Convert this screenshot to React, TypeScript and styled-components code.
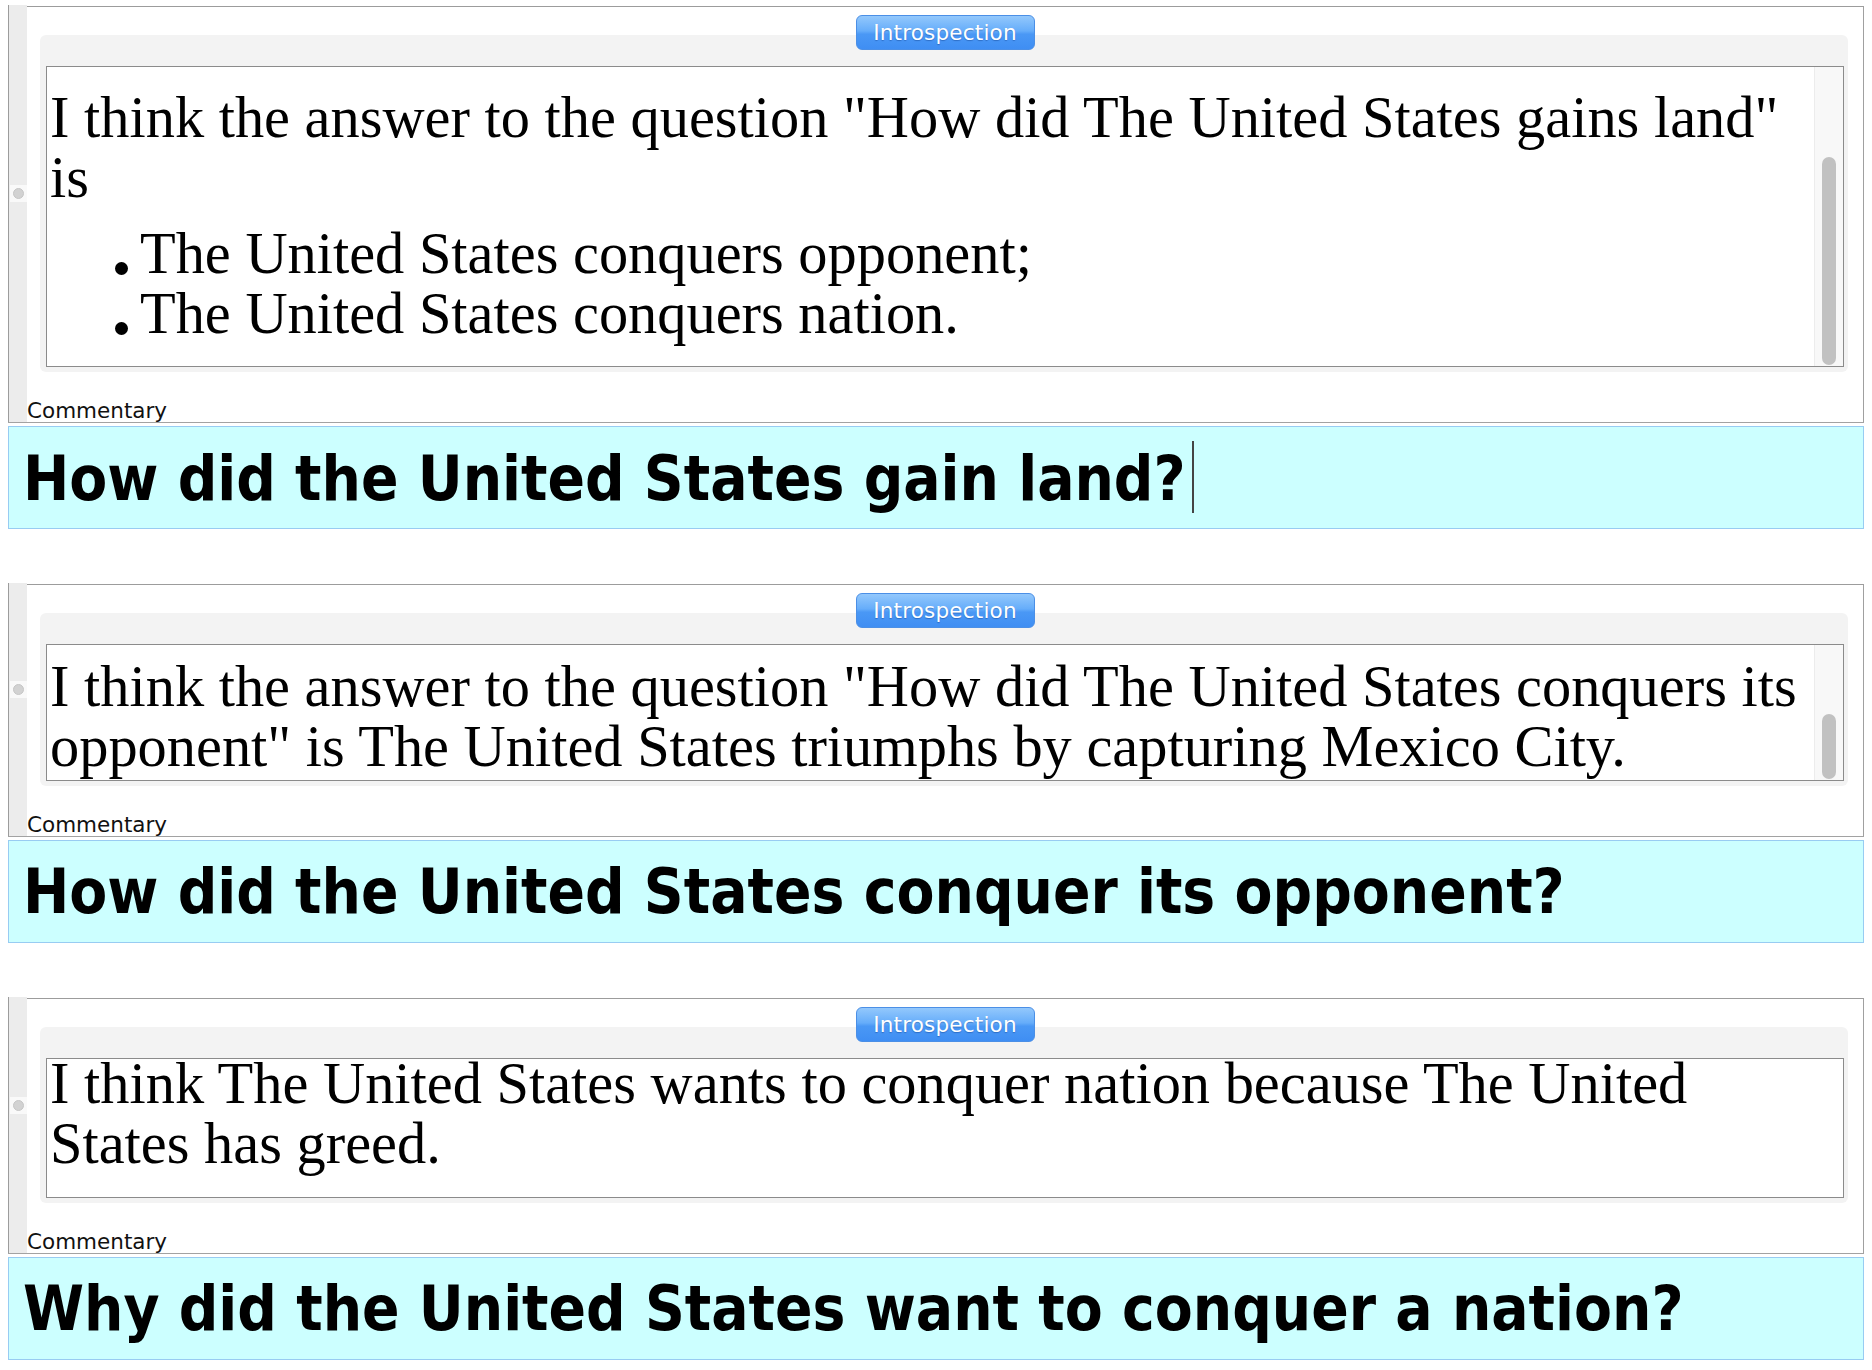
import React from 'react';
import styled, { createGlobalStyle } from 'styled-components';

const GlobalStyle = createGlobalStyle`
  html, body {
    margin: 0;
    padding: 0;
    background: #ffffff;
  }
  body {
    font-family: "DejaVu Sans", "Liberation Sans", sans-serif;
  }
`;

const Page = styled.div`
  padding: 6px 8px 0;
  display: flex;
  flex-direction: column;
  gap: 55px;
`;

const Block = styled.section`
  display: flex;
  flex-direction: column;
  gap: 3px;
`;

const Panel = styled.div`
  display: grid;
  grid-template-columns: 19px 1fr;
  border-bottom: 1px solid #a2a2a2;
`;

const Gutter = styled.div`
  border-left: 1px solid #9c9c9c;
  background: #ececec;
  margin-top: -1px;
  display: flex;
  align-items: center;
  justify-content: center;
  padding-bottom: 40px;
`;

const Handle = styled.div`
  width: 17px;
  height: 17px;
  background: #f9f9f9;
  display: flex;
  align-items: center;
  justify-content: center;

  &::after {
    content: '';
    width: 9px;
    height: 9px;
    border-radius: 50%;
    background: #d2d2d2;
    border: 1px solid #c6c6c6;
  }
`;

const Main = styled.div`
  border-top: 1px solid #9c9c9c;
  border-right: 1px solid #a0a0a0;
  display: flex;
  flex-direction: column;
  padding-top: 8px;
`;

const TabButton = styled.div`
  position: relative;
  z-index: 1;
  align-self: center;
  width: 179px;
  height: 35px;
  box-sizing: border-box;
  border: 1px solid #4b8fe6;
  border-radius: 6px;
  background: linear-gradient(to bottom, #93c8fc 0%, #66adfa 45%, #4a98f5 55%, #3f8ef3 100%);
  color: #ffffff;
  font-size: 21.5px;
  letter-spacing: 0.2px;
  display: flex;
  align-items: center;
  justify-content: center;
  text-shadow: 0 1px 1px rgba(0, 40, 110, 0.35);
`;

const GroupBox = styled.div`
  margin: -15px 15px 0 13px;
  padding: 31px 4px 5px 6px;
  background: #f3f3f3;
  border-radius: 6px;
`;

const TextBox = styled.div<{ $height: number }>`
  height: ${({ $height }) => $height}px;
  box-sizing: border-box;
  border: 1px solid #8b8b8b;
  background: #ffffff;
  display: flex;
  overflow: hidden;
`;

const TextContent = styled.div<{ $shift: number }>`
  flex: 1;
  margin-top: ${({ $shift }) => $shift}px;
  padding-left: 3px;
  font-family: "Liberation Serif", "Times New Roman", serif;
  font-size: 58.4px;
  line-height: 60px;
  color: #000000;
`;

const Para = styled.div``;

const BulletList = styled.ul`
  list-style: none;
  margin: 16px 0 0;
  padding: 0 0 0 65px;
`;

const BulletItem = styled.li`
  &::before {
    content: '';
    display: inline-block;
    width: 13px;
    height: 13px;
    border-radius: 50%;
    background: #000000;
    margin-right: 12px;
    vertical-align: -2px;
  }
`;

const ScrollTrack = styled.div<{ $thumbTop: number; $visible: boolean }>`
  width: 28px;
  border-left: 1px solid ${({ $visible }) => ($visible ? '#ececec' : 'transparent')};
  background: ${({ $visible }) => ($visible ? '#f8f8f8' : 'transparent')};
  display: flex;
  flex-direction: column;
  align-items: center;
  padding-top: ${({ $thumbTop }) => $thumbTop}px;
  padding-bottom: 1px;
`;

const ScrollThumb = styled.div`
  width: 14px;
  flex: 1;
  border-radius: 7px;
  background: #c1c1c1;
`;

const Label = styled.div`
  margin-top: 28px;
  font-size: 21.5px;
  line-height: 22px;
  color: #111111;
`;

const QuestionBar = styled.div`
  height: 103px;
  box-sizing: border-box;
  border: 1px solid #98ccf2;
  background: #ccffff;
  padding: 14px 0 0 14px;
`;

const Question = styled.h1`
  margin: 0;
  font-family: "DejaVu Sans", "Liberation Sans", sans-serif;
  font-stretch: condensed;
  font-weight: bold;
  font-size: 61.5px;
  line-height: 74px;
  color: #000000;
  white-space: nowrap;
`;

const Caret = styled.span`
  display: inline-block;
  width: 2px;
  height: 72px;
  background: #444444;
  margin-left: 6px;
  vertical-align: -13px;
`;

type Entry = {
  boxHeight: number;
  shift: number;
  thumbTop?: number;
  body: React.ReactNode;
  question: string;
  caret?: boolean;
};

const entries: Entry[] = [
  {
    boxHeight: 301,
    shift: 21,
    thumbTop: 90,
    body: (
      <>
        <Para>I think the answer to the question "How did The United States gains land" is</Para>
        <BulletList>
          <BulletItem>The United States conquers opponent;</BulletItem>
          <BulletItem>The United States conquers nation.</BulletItem>
        </BulletList>
      </>
    ),
    question: 'How did the United States gain land?',
    caret: true,
  },
  {
    boxHeight: 137,
    shift: 12,
    thumbTop: 69,
    body: (
      <Para>
        I think the answer to the question "How did The United States conquers its opponent" is The United
        States triumphs by capturing Mexico City.
      </Para>
    ),
    question: 'How did the United States conquer its opponent?',
  },
  {
    boxHeight: 140,
    shift: -5,
    body: <Para>I think The United States wants to conquer nation because The United States has greed.</Para>,
    question: 'Why did the United States want to conquer a nation?',
  },
];

function IntrospectionBlock({ entry }: { entry: Entry }) {
  const hasThumb = entry.thumbTop !== undefined;
  return (
    <Block>
      <Panel>
        <Gutter>
          <Handle />
        </Gutter>
        <Main>
          <TabButton>Introspection</TabButton>
          <GroupBox>
            <TextBox $height={entry.boxHeight}>
              <TextContent $shift={entry.shift}>{entry.body}</TextContent>
              <ScrollTrack $thumbTop={entry.thumbTop ?? 0} $visible={hasThumb}>
                {hasThumb && <ScrollThumb />}
              </ScrollTrack>
            </TextBox>
          </GroupBox>
          <Label>Commentary</Label>
        </Main>
      </Panel>
      <QuestionBar>
        <Question>
          {entry.question}
          {entry.caret && <Caret />}
        </Question>
      </QuestionBar>
    </Block>
  );
}

export default function App() {
  return (
    <>
      <GlobalStyle />
      <Page>
        {entries.map((entry, i) => (
          <IntrospectionBlock key={i} entry={entry} />
        ))}
      </Page>
    </>
  );
}
